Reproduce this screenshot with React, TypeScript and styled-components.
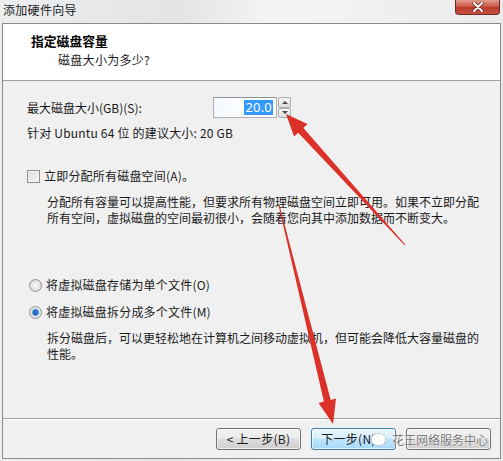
import React from 'react'
import styled, { createGlobalStyle } from 'styled-components'

const GlobalStyle = createGlobalStyle`
  html, body {
    margin: 0;
    padding: 0;
    overflow: hidden;
    background: #f2f3f4;
  }
  * {
    box-sizing: border-box;
  }
`

const Window = styled.div`
  position: relative;
  width: 503px;
  height: 461px;
  display: flex;
  flex-direction: column;
  font-family: "Noto Sans CJK SC", "Noto Sans", sans-serif;
  font-size: 12px;
  color: #1a1a1a;
  background: linear-gradient(90deg, #eceeef 0%, #e2e4e6 35%, #f4f5f6 55%, #e8eaeb 100%);
`

const TitleBar = styled.div`
  height: 23px;
  flex: 0 0 23px;
  display: flex;
  align-items: flex-start;
  justify-content: space-between;
  padding-left: 3px;
`

const TitleText = styled.span`
  line-height: 20px;
  font-size: 12px;
  letter-spacing: 0.3px;
  color: #222;
`

const CloseButton = styled.div`
  width: 45px;
  height: 15px;
  margin-right: 3px;
  border: 1px solid #6e2a24;
  border-top: none;
  border-radius: 0 0 4px 4px;
  background: linear-gradient(180deg, #e09a8e 0%, #cf5a47 45%, #b83a2a 55%, #c9513f 100%);
  display: flex;
  align-items: center;
  justify-content: center;
`

const Frame = styled.div`
  margin-left: 2px;
  width: 499px;
  height: 436px;
  border: 1px solid #8a8c8e;
  background: #f0f0f0;
  display: flex;
  flex-direction: column;
`

const Header = styled.div`
  flex: 0 0 57px;
  background: #ffffff;
  border-bottom: 1px solid #a0a0a0;
  padding: 9px 0 0 28px;
`

const Heading = styled.div`
  font-weight: 700;
  font-size: 12.8px;
  line-height: 16px;
  color: #000;
`

const SubHeading = styled.div`
  line-height: 16px;
  margin-top: 3px;
  padding-left: 27px;
  letter-spacing: 0.3px;
`

const Body = styled.div`
  flex: 1;
  padding: 16px 0 0 24px;
  display: flex;
  flex-direction: column;
`

const Row = styled.div<{ $mt?: number }>`
  display: flex;
  align-items: center;
  margin-top: ${({ $mt }) => $mt ?? 0}px;
  line-height: 16px;
  letter-spacing: 0.2px;
`

const FieldLabel = styled.span`
  width: 186px;
  letter-spacing: 0;
`

const SpinBox = styled.div`
  display: flex;
  height: 21px;
`

const SpinInput = styled.div`
  width: 64px;
  height: 21px;
  border: 1px solid #abadb3;
  border-top-color: #8f9196;
  background: linear-gradient(90deg, #f3f9fd 0%, #ffffff 60%);
  display: flex;
  align-items: center;
  justify-content: flex-end;
  padding-right: 3px;
`

const Selected = styled.span`
  background: #3399ff;
  color: #fff;
  font-size: 13px;
  line-height: 15px;
  padding: 0 1px;
  font-family: "Noto Sans", sans-serif;
`

const SpinButtons = styled.div`
  width: 13px;
  display: flex;
  flex-direction: column;
  margin-left: 1px;
`

const SpinButton = styled.div`
  flex: 1;
  border: 1px solid #a9acb2;
  border-radius: 2px;
  background: linear-gradient(180deg, #f7f7f7, #dedede);
  display: flex;
  align-items: center;
  justify-content: center;
`

const Arrow = styled.span<{ $down?: boolean }>`
  width: 0;
  height: 0;
  border-left: 3px solid transparent;
  border-right: 3px solid transparent;
  ${({ $down }) => ($down ? 'border-top: 3px solid #4a4a4a;' : 'border-bottom: 3px solid #4a4a4a;')}
`

const CheckBox = styled.span`
  width: 13px;
  height: 13px;
  border: 1px solid #8e8f8f;
  background: linear-gradient(135deg, #dcdcdc, #f6f6f6);
  box-shadow: inset 0 0 0 1px #f4f4f4;
  margin: 0 4px 0 0;
`

const Radio = styled.span<{ $checked?: boolean }>`
  width: 13px;
  height: 13px;
  border-radius: 50%;
  border: 1px solid #8e8f8f;
  background: ${({ $checked }) =>
    $checked
      ? 'radial-gradient(circle, #2a6fbf 0, #2a6fbf 2.5px, #9cc3ea 3.5px, #eaeaea 4.5px)'
      : 'radial-gradient(circle, #f6f6f6 0, #dcdcdc 6px)'};
  margin: 0 4px 0 2px;
`

const Desc = styled.div<{ $mt: number }>`
  margin-top: ${({ $mt }) => $mt}px;
  padding-left: 20px;
  line-height: 16px;
`

const Footer = styled.div`
  flex: 0 0 40px;
  border-top: 1px solid #a0a0a0;
  box-shadow: inset 0 1px 0 #ffffff;
  display: flex;
  justify-content: flex-end;
  gap: 10px;
  padding: 9px 9px 0 0;
`

const Button = styled.div<{ $primary?: boolean }>`
  width: 85px;
  height: 22px;
  border-radius: 3px;
  border: 1px solid ${({ $primary }) => ($primary ? '#3c7fb1' : '#707070')};
  background: ${({ $primary }) =>
    $primary
      ? 'linear-gradient(180deg, #eaf6fd 0%, #d9f0fc 45%, #bee6fd 50%, #a7d9f5 100%)'
      : 'linear-gradient(180deg, #f2f2f2 0%, #ebebeb 45%, #dddddd 50%, #cfcfcf 100%)'};
  box-shadow: inset 0 0 0 1px rgba(255, 255, 255, 0.7);
  display: flex;
  align-items: center;
  justify-content: center;
  letter-spacing: 0.3px;
  line-height: 16px;
`

const Watermark = styled.div`
  position: absolute;
  left: 371px;
  top: 429px;
  display: flex;
  align-items: center;
  gap: 6px;
  height: 20px;
  color: #777777;
  font-size: 12px;
  text-shadow: 0 0 2px #fff, 0 0 1px #fff;
`

const WatermarkLogo = styled.span`
  width: 15px;
  height: 13px;
  border-radius: 50%;
  background: #fff;
  border: 1px dotted #9a9a9a;
`

const Overlay = styled.svg`
  position: absolute;
  left: 0;
  top: 0;
  pointer-events: none;
`

export default function App() {
  return (
    <>
      <GlobalStyle />
      <Window>
        <TitleBar>
          <TitleText>添加硬件向导</TitleText>
          <CloseButton>
            <svg width="12" height="10" viewBox="0 0 12 10">
              <path d="M2 1 L10 9 M10 1 L2 9" stroke="#5a1e16" strokeWidth="3.2" strokeLinecap="round" />
              <path d="M2 1 L10 9 M10 1 L2 9" stroke="#ffffff" strokeWidth="2" strokeLinecap="round" />
            </svg>
          </CloseButton>
        </TitleBar>
        <Frame>
          <Header>
            <Heading>指定磁盘容量</Heading>
            <SubHeading>磁盘大小为多少?</SubHeading>
          </Header>
          <Body>
            <Row>
              <FieldLabel>最大磁盘大小(GB)(S):</FieldLabel>
              <SpinBox>
                <SpinInput>
                  <Selected>20.0</Selected>
                </SpinInput>
                <SpinButtons>
                  <SpinButton><Arrow /></SpinButton>
                  <SpinButton><Arrow $down /></SpinButton>
                </SpinButtons>
              </SpinBox>
            </Row>
            <Row $mt={7}>针对 Ubuntu 64 位 的建议大小: 20 GB</Row>
            <Row $mt={27}>
              <CheckBox />
              立即分配所有磁盘空间(A)。
            </Row>
            <Desc $mt={10}>
              分配所有容量可以提高性能，但要求所有物理磁盘空间立即可用。如果不立即分配
              <br />
              所有空间，虚拟磁盘的空间最初很小，会随着您向其中添加数据而不断变大。
            </Desc>
            <Row $mt={51}>
              <Radio />
              将虚拟磁盘存储为单个文件(O)
            </Row>
            <Row $mt={11}>
              <Radio $checked />
              将虚拟磁盘拆分成多个文件(M)
            </Row>
            <Desc $mt={10}>
              拆分磁盘后，可以更轻松地在计算机之间移动虚拟机，但可能会降低大容量磁盘的
              <br />
              性能。
            </Desc>
          </Body>
          <Footer>
            <Button>&lt; 上一步(B)</Button>
            <Button $primary>下一步(N) &gt;</Button>
            <Button />
          </Footer>
        </Frame>
        <Watermark>
          <WatermarkLogo />
          <span>花王网络服务中心</span>
        </Watermark>
        <Overlay width="503" height="461" viewBox="0 0 503 461">
          <polygon
            points="286,114 307.5,124.1 303.4,127.9 405.4,244.7 404.6,245.3 298.2,132.7 294.1,136.4"
            fill="#dc3129"
          />
          <polygon
            points="333,424 336,398.5 330.7,399.9 279.5,204.9 278.5,205.1 323.9,401.5 318.6,402.9"
            fill="#dc3129"
          />
        </Overlay>
      </Window>
    </>
  )
}
